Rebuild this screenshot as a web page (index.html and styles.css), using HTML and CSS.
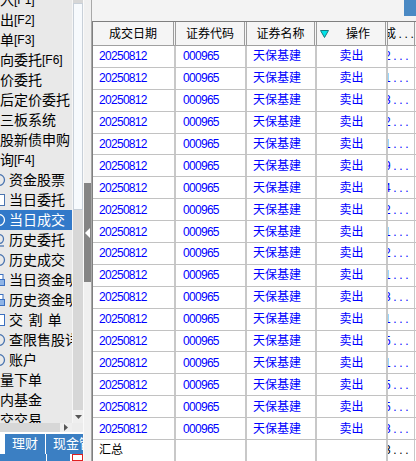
FILE: index.html
```html
<!DOCTYPE html>
<html lang="zh-CN">
<head>
<meta charset="utf-8">
<title>当日成交</title>
<link rel="stylesheet" href="styles.css">
</head>
<body>
<div class="app">
  <aside class="left">
    <div class="tree-area">
      <div class="tree">
        <div class="tree-inner">
          <div class="node lvl0">买入<span class="fk">[F1]</span></div>
          <div class="node lvl0">卖出<span class="fk">[F2]</span></div>
          <div class="node lvl0">撤单<span class="fk">[F3]</span></div>
          <div class="node lvl0">双向委托<span class="fk">[F6]</span></div>
          <div class="node lvl0">市价委托</div>
          <div class="node lvl0">盘后定价委托</div>
          <div class="node lvl0">新三板系统</div>
          <div class="node lvl0">新股新债申购</div>
          <div class="node lvl0">查询<span class="fk">[F4]</span></div>
          <div class="node lvl1"><svg class="ico" viewBox="0 0 14 14"><circle cx="7" cy="7" r="5.5" fill="none" stroke="#4a74b0" stroke-width="1.3"/></svg>资金股票</div>
          <div class="node lvl1"><svg class="ico" viewBox="0 0 14 14"><rect x="1.5" y="1.5" width="11" height="11" fill="#fff" stroke="#4a74b0"/></svg>当日委托</div>
          <div class="node lvl1 sel"><svg class="ico" viewBox="0 0 14 14"><circle cx="7" cy="7" r="5.5" fill="none" stroke="#fff" stroke-width="1.3"/></svg>当日成交</div>
          <div class="node lvl1"><svg class="ico" viewBox="0 0 14 14"><circle cx="7" cy="6" r="4.5" fill="none" stroke="#4a74b0" stroke-width="1.3"/><path d="M2 13 H12" stroke="#4a74b0" stroke-width="1.3"/></svg>历史委托</div>
          <div class="node lvl1"><svg class="ico" viewBox="0 0 14 14"><circle cx="7" cy="7" r="5.5" fill="none" stroke="#4a74b0" stroke-width="1.3"/></svg>历史成交</div>
          <div class="node lvl1"><svg class="ico" viewBox="0 0 14 14"><rect x="3" y="1.5" width="8" height="5" fill="#fff" stroke="#3b6fc0"/><rect x="1.5" y="6.5" width="11" height="6" fill="#8fb4e6" stroke="#3b6fc0"/></svg>当日资金明细</div>
          <div class="node lvl1"><svg class="ico" viewBox="0 0 14 14"><rect x="3" y="1.5" width="8" height="5" fill="#fff" stroke="#3b6fc0"/><rect x="1.5" y="6.5" width="11" height="6" fill="#8fb4e6" stroke="#3b6fc0"/></svg>历史资金明细</div>
          <div class="node lvl1"><svg class="ico" viewBox="0 0 14 14"><rect x="1.5" y="1.5" width="11" height="11" fill="#fff" stroke="#3b6fc0"/></svg><span class="spaced">交 割 单</span></div>
          <div class="node lvl1"><svg class="ico" viewBox="0 0 14 14"><circle cx="7" cy="7" r="5.5" fill="none" stroke="#4a74b0" stroke-width="1.3"/></svg>查限售股详情</div>
          <div class="node lvl1"><svg class="ico" viewBox="0 0 14 14"><circle cx="7" cy="7" r="5.5" fill="none" stroke="#4a74b0" stroke-width="1.3"/></svg>账户</div>
          <div class="node lvl0">批量下单</div>
          <div class="node lvl0">场内基金</div>
          <div class="node lvl0">转交交易</div>
        </div>
      </div>
      <div class="vscroll">
        <div class="thumb"></div>
        <div class="track"></div>
        <div class="sb-btn"><svg width="7" height="4" viewBox="0 0 7 4"><polygon points="0,0 7,0 3.5,4" fill="#555"/></svg></div>
      </div>
    </div>
    <div class="hbar">
      <div class="hscroll">
        <div class="htrack"></div>
        <div class="sb-btn hb"><svg width="4" height="7" viewBox="0 0 4 7"><polygon points="0,0 4,3.5 0,7" fill="#555"/></svg></div>
      </div>
      <div class="corner"></div>
    </div>
    <div class="tabs">
      <div class="tab t1">理财</div>
      <div class="tab t2"><span>现金管</span></div>
    </div>
    <div class="tabs2">
      <div class="b b1"></div>
      <div class="b b2"></div>
      <div class="redbox"></div>
    </div>
  </aside>

  <div class="splitter">
    <div class="grip"><svg width="5" height="10" viewBox="0 0 5 10"><polygon points="5,0 0,5 5,10" fill="#fff"/></svg></div>
  </div>

  <main class="right">
    <div class="topbar"><div class="tb-btn"></div></div>
    <div class="grid">
      <div class="hdr">
        <div class="c">成交日期</div>
        <div class="c">证券代码</div>
        <div class="c">证券名称</div>
        <div class="c op"><svg class="sort" width="9" height="8" viewBox="0 0 9 8"><polygon points="0.5,0.5 8.5,0.5 4.5,7.5" fill="#00e4e8" stroke="#167a80"/></svg><span>操作</span></div>
        <div class="c e"><span>成...</span></div>
      </div>
      <div class="row"><div class="c d num">20250812</div><div class="c k num">000965</div><div class="c n">天保基建</div><div class="c m">卖出</div><div class="c e"><span>2...</span></div></div>
      <div class="row"><div class="c d num">20250812</div><div class="c k num">000965</div><div class="c n">天保基建</div><div class="c m">卖出</div><div class="c e"><span>1...</span></div></div>
      <div class="row"><div class="c d num">20250812</div><div class="c k num">000965</div><div class="c n">天保基建</div><div class="c m">卖出</div><div class="c e"><span>3...</span></div></div>
      <div class="row"><div class="c d num">20250812</div><div class="c k num">000965</div><div class="c n">天保基建</div><div class="c m">卖出</div><div class="c e"><span>2...</span></div></div>
      <div class="row"><div class="c d num">20250812</div><div class="c k num">000965</div><div class="c n">天保基建</div><div class="c m">卖出</div><div class="c e"><span>1...</span></div></div>
      <div class="row"><div class="c d num">20250812</div><div class="c k num">000965</div><div class="c n">天保基建</div><div class="c m">卖出</div><div class="c e"><span>9...</span></div></div>
      <div class="row"><div class="c d num">20250812</div><div class="c k num">000965</div><div class="c n">天保基建</div><div class="c m">卖出</div><div class="c e"><span>4...</span></div></div>
      <div class="row"><div class="c d num">20250812</div><div class="c k num">000965</div><div class="c n">天保基建</div><div class="c m">卖出</div><div class="c e"><span>2...</span></div></div>
      <div class="row"><div class="c d num">20250812</div><div class="c k num">000965</div><div class="c n">天保基建</div><div class="c m">卖出</div><div class="c e"><span>1...</span></div></div>
      <div class="row"><div class="c d num">20250812</div><div class="c k num">000965</div><div class="c n">天保基建</div><div class="c m">卖出</div><div class="c e"><span>2...</span></div></div>
      <div class="row"><div class="c d num">20250812</div><div class="c k num">000965</div><div class="c n">天保基建</div><div class="c m">卖出</div><div class="c e"><span>1...</span></div></div>
      <div class="row"><div class="c d num">20250812</div><div class="c k num">000965</div><div class="c n">天保基建</div><div class="c m">卖出</div><div class="c e"><span>3...</span></div></div>
      <div class="row"><div class="c d num">20250812</div><div class="c k num">000965</div><div class="c n">天保基建</div><div class="c m">卖出</div><div class="c e"><span>1...</span></div></div>
      <div class="row"><div class="c d num">20250812</div><div class="c k num">000965</div><div class="c n">天保基建</div><div class="c m">卖出</div><div class="c e"><span>5...</span></div></div>
      <div class="row"><div class="c d num">20250812</div><div class="c k num">000965</div><div class="c n">天保基建</div><div class="c m">卖出</div><div class="c e"><span>1...</span></div></div>
      <div class="row"><div class="c d num">20250812</div><div class="c k num">000965</div><div class="c n">天保基建</div><div class="c m">卖出</div><div class="c e"><span>5...</span></div></div>
      <div class="row"><div class="c d num">20250812</div><div class="c k num">000965</div><div class="c n">天保基建</div><div class="c m">卖出</div><div class="c e"><span>5...</span></div></div>
      <div class="row"><div class="c d num">20250812</div><div class="c k num">000965</div><div class="c n">天保基建</div><div class="c m">卖出</div><div class="c e"><span>3...</span></div></div>
      <div class="row sum"><div class="c d">汇总</div><div class="c k"></div><div class="c n"></div><div class="c m"></div><div class="c e"><span>3...</span></div></div>
    </div>
  </main>
</div>
</body>
</html>
```

FILE: styles.css
```css
* { box-sizing: border-box; }
html, body { margin: 0; padding: 0; }
body {
  width: 416px;
  height: 461px;
  overflow: hidden;
  background: #f0f0f0;
  font-family: "Liberation Sans", "Noto Sans CJK SC", sans-serif;
  font-size: 12px;
}
.app { display: flex; height: 461px; }

/* ---------- left navigation ---------- */
.left {
  width: 83px;
  flex: none;
  display: flex;
  flex-direction: column;
  background: #fff;
  overflow: hidden;
}
.tree-area { height: 423px; display: flex; }
.tree { width: 72px; flex: none; overflow: hidden; background: #e9e9e9; }
.tree-inner { margin-top: -10px; }
.node {
  height: 20px;
  display: flex;
  align-items: center;
  white-space: nowrap;
  font-size: 14px;
  line-height: 16px;
  color: #000;
}
.fk { font-size: 12px; }
.lvl0 { margin-left: -14px; }
.lvl1 { margin-left: -8px; }
.ico { width: 14px; height: 14px; flex: none; margin-right: 3px; }
.node.sel { background: #3279c9; color: #fff; }
.spaced { word-spacing: 1.5px; }

.vscroll {
  width: 11px;
  flex: none;
  display: flex;
  flex-direction: column;
  background: #d7d7d7;
  border-left: 1px solid #f6f6f6;
}
.thumb {
  height: 207px;
  margin-top: 3px;
  background: #f7fafd;
  border: 1px solid #c8d0d9;
}
.track { flex: 1; }
.sb-btn {
  height: 13px;
  display: flex;
  align-items: center;
  justify-content: center;
  background: #efefef;
}
.hbar { height: 9px; display: flex; }
.hscroll { width: 72px; display: flex; background: #d7d7d7; }
.htrack { flex: 1; }
.sb-btn.hb { height: 9px; width: 12px; }
.corner { flex: 1; background: #ececec; }

.tabs {
  height: 20px;
  margin-top: 2px;
  display: flex;
  gap: 1px;
  padding-left: 5px;
  overflow: hidden;
  background: #fff;
}
.tab {
  flex: none;
  display: flex;
  align-items: center;
  background: #3b7fc3;
  color: #fff;
  font-size: 13px;
  line-height: 16px;
  white-space: nowrap;
  overflow: hidden;
}
.tab.t1 { width: 40px; justify-content: center; }
.tab.t2 { width: 37px; padding-left: 7px; }
.tabs2 { flex: 1; display: flex; gap: 1px; background: #fff; }
.b { background: #3b7fc3; }
.b1 { width: 47px; }
.b2 { width: 23px; }
.redbox { width: 11px; margin-left: 1px; border: 1px solid #e02020; background: #fff; }

/* ---------- splitter ---------- */
.splitter {
  width: 9px;
  flex: none;
  background: #f0f0f0;
  border-left: 1px solid #fafafa;
  border-right: 1px solid #a8a8a8;
  padding-top: 183px;
}
.grip {
  height: 99px;
  background: #858585;
  display: flex;
  align-items: center;
  justify-content: center;
}

/* ---------- right grid ---------- */
.right {
  flex: 1;
  min-width: 0;
  display: flex;
  flex-direction: column;
  background: #f3f3f3;
}
.topbar { height: 21px; display: flex; justify-content: flex-end; align-items: flex-start; }
.tb-btn { width: 12px; height: 16px; background: #4a89c4; }
.grid {
  flex: 1;
  background: #fff;
  border-top: 1px solid #7f7f7f;
  border-left: 1px solid #7f7f7f;
  overflow: hidden;
}
.hdr, .row {
  display: grid;
  grid-template-columns: 83px 71px 70px 71px 27px;
}
.hdr {
  height: 24px;
  background: #f5f5f5;
  border-bottom: 1px solid #a0a0a0;
}
.hdr .c {
  border-right: 3px double #9c9c9c;
  display: flex;
  align-items: center;
  justify-content: center;
  white-space: nowrap;
  overflow: hidden;
  line-height: 14px;
  color: #000;
}
.hdr .c:last-child { border-right: 1px solid #9c9c9c; }
.hdr .op { justify-content: flex-start; }
.sort { flex: none; margin-left: 3px; }
.hdr .op span { flex: 1; text-align: center; padding-left: 2px; }

.row { height: 21.9px; border-bottom: 1px solid #c2c2c2; }
.row .c {
  border-right: 2px solid #c8c8c8;
  display: flex;
  align-items: center;
  white-space: nowrap;
  overflow: hidden;
  line-height: 14px;
  color: #0000ff;
}
.row .c:last-child { border-right: 1px solid #c8c8c8; }
.row .d { padding-left: 6px; }
.row .k { padding-left: 7px; }
.row .n { padding-left: 6px; }
.row .m { justify-content: center; }
.num { letter-spacing: -0.7px; }
.c.e { justify-content: flex-start; }
.c.e span { margin-left: -4px; letter-spacing: 2.6px; }
.row.sum .c { color: #000; }
```
